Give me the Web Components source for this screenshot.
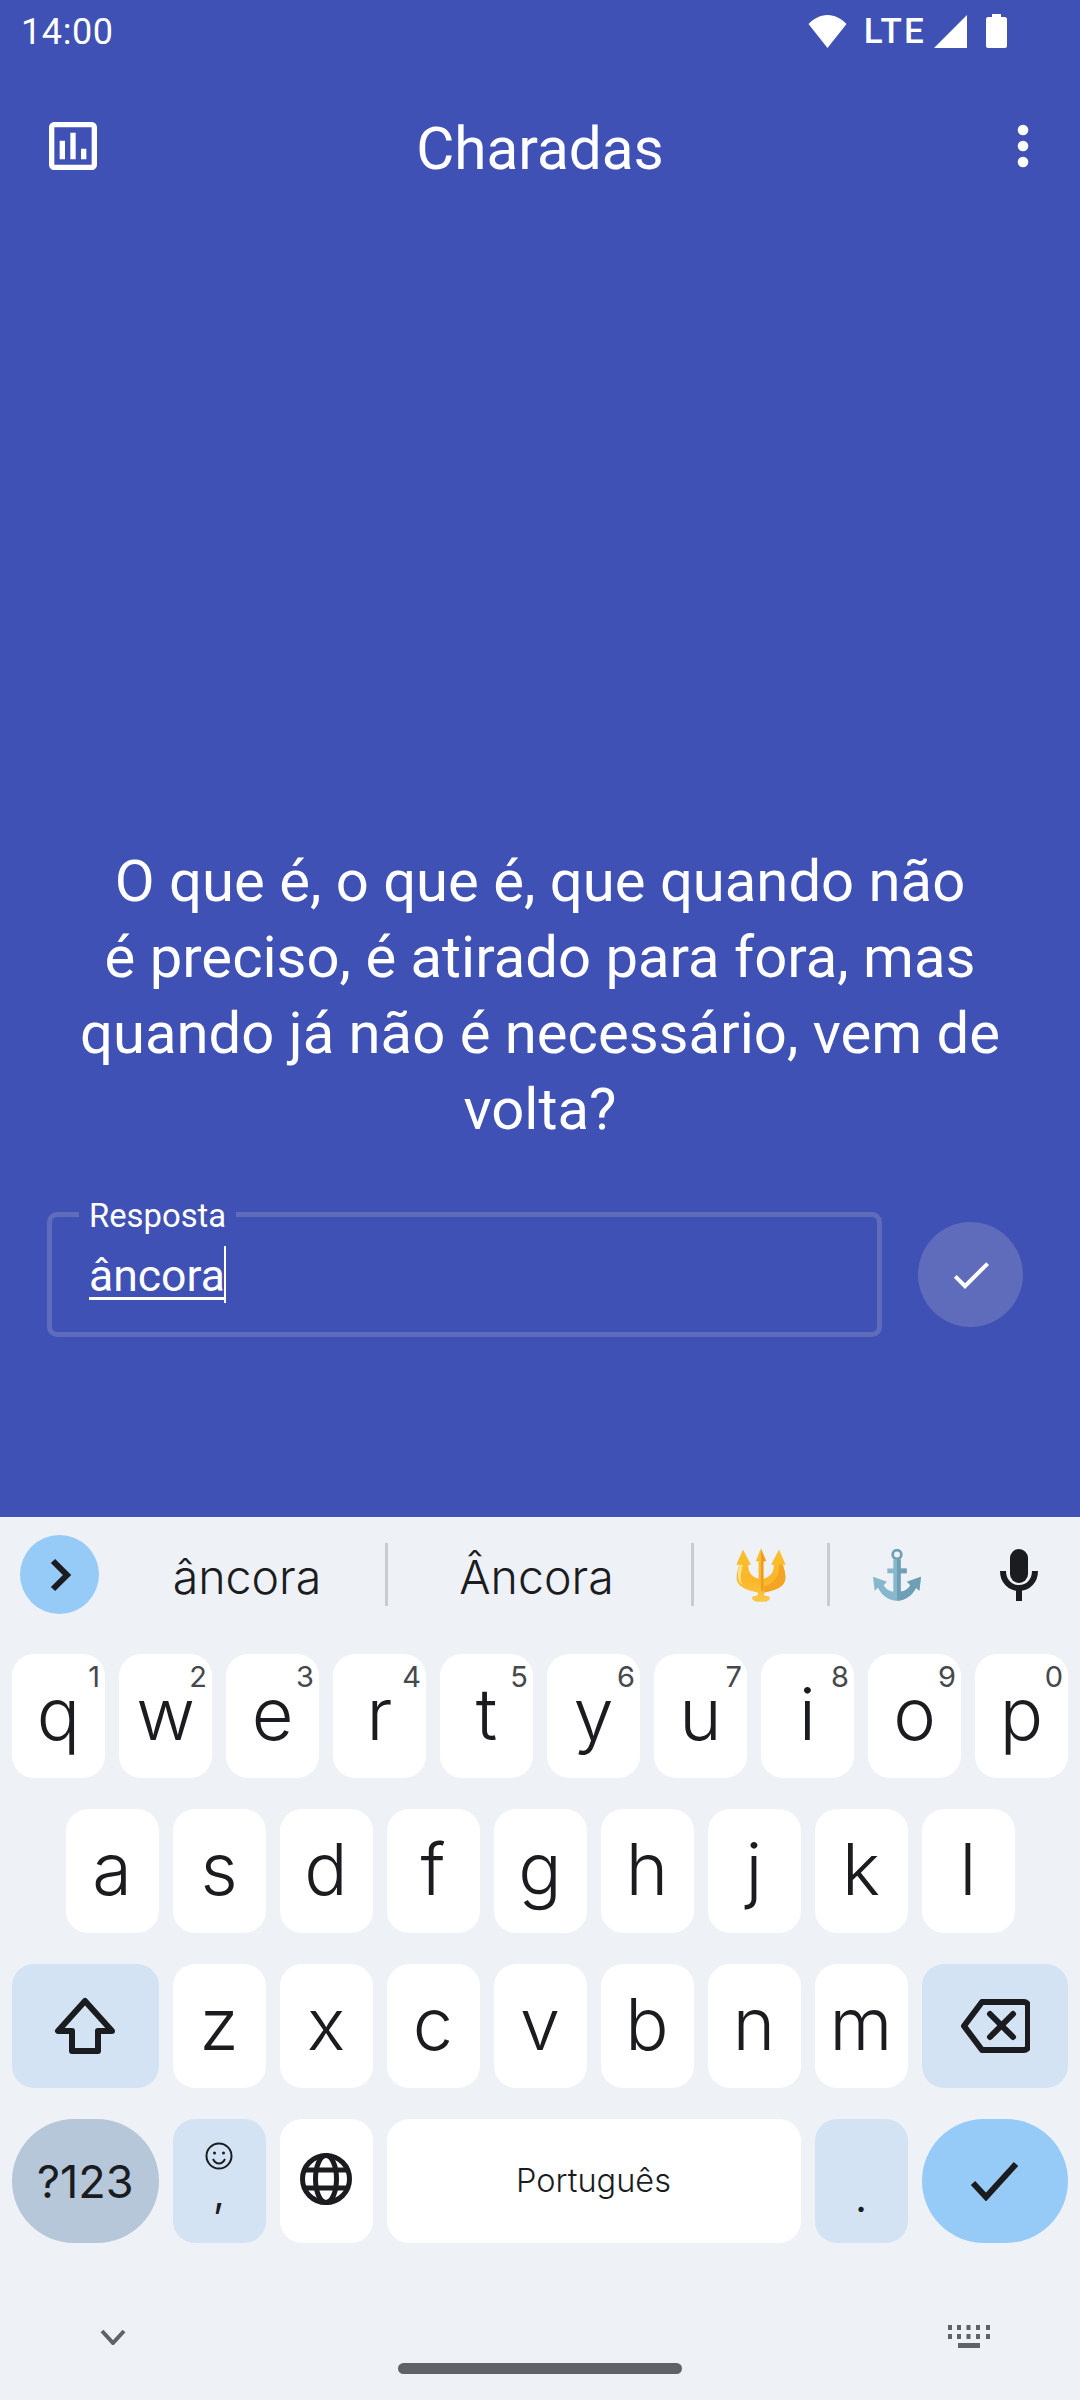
<!DOCTYPE html>
<html lang="pt">
<head>
<meta charset="utf-8">
<title>Charadas</title>
<style>
  html, body { margin: 0; padding: 0; }
  body { width: 1080px; height: 2400px; font-family: Roboto, sans-serif; background: #3f51b5; }
</style>
</head>
<body>
<charadas-app></charadas-app>

<script>
class StatusBar extends HTMLElement {
  connectedCallback() {
    this.attachShadow({ mode: 'open' }).innerHTML = `
      <style>
        :host { display: flex; align-items: center; justify-content: space-between; height: 62px; padding: 0 73px 0 21px; color: #fff; font-family: Roboto, sans-serif; }
        .time { font-size: 36px; letter-spacing: .6px; margin-top: 2px; }
        .right { display: flex; align-items: center; }
        .lte { font-size: 35px; font-weight: 500; margin: 0 8px 0 17px; letter-spacing: 2.200px; }
        svg { display: block; fill: #fff; }
      </style>
      <span class="time">14:00</span>
      <div class="right">
        <svg width="39" height="33" viewBox="0 0 39 33"><path d="M19.500 33 .5 9C5 4 12 0 19.500 0S34 4 38.500 9z"/></svg>
        <span class="lte">LTE</span>
        <svg width="33" height="33" viewBox="0 0 33 33"><path d="M33 0v33H0z"/></svg>
        <svg style="margin-left:19px" width="21" height="34" viewBox="0 0 21 34"><path d="M6 0h9v3h4c1 0 2 1 2 2v27c0 1-1 2-2 2H2c-1 0-2-1-2-2V5c0-1 1-2 2-2h4z"/></svg>
      </div>`;
  }
}

class AppToolbar extends HTMLElement {
  connectedCallback() {
    this.attachShadow({ mode: 'open' }).innerHTML = `
      <style>
        :host { display: grid; grid-template-columns: 1fr auto 1fr; align-items: center; height: 168px; padding: 0 25px 0 41px; color: #fff; font-family: Roboto, sans-serif; }
        h1 { margin: 6px 0 0 -16px; font-size: 58.500px; font-weight: 400; }
        svg { display: block; fill: #fff; width: 64px; height: 64px; }
        .end { justify-self: end; }
      </style>
      <svg viewBox="0 0 24 24"><path d="M19 3H5c-1.100 0-2 .9-2 2v14c0 1.100.9 2 2 2h14c1.100 0 2-.9 2-2V5c0-1.100-.9-2-2-2zm0 16H5V5h14v14z"/><path d="M7 10h2v7H7zm4-3h2v10h-2zm4 6h2v4h-2z"/></svg>
      <h1><slot></slot></h1>
      <svg class="end" viewBox="0 0 24 24"><circle cx="12" cy="6" r="2"/><circle cx="12" cy="12" r="2"/><circle cx="12" cy="18" r="2"/></svg>`;
  }
}

class RiddleText extends HTMLElement {
  connectedCallback() {
    this.attachShadow({ mode: 'open' }).innerHTML = `
      <style>
        :host { display: block; text-align: center; color: #fff; font-size: 58px; line-height: 76px; font-family: Roboto, sans-serif; }
      </style>
      <slot></slot>`;
  }
}

class AnswerField extends HTMLElement {
  connectedCallback() {
    this.attachShadow({ mode: 'open' }).innerHTML = `
      <style>
        :host { display: flex; align-items: center; padding: 0 57px 0 47px; color: #fff; font-family: Roboto, sans-serif; }
        .box { position: relative; box-sizing: border-box; width: 835px; height: 125px; border: 5px solid #5f6cbc; border-radius: 10px; padding: 32px 0 0 37px; }
        .label { position: absolute; left: 27px; top: -19px; padding: 0 10px; font-size: 32.800px; line-height: 36px; background: #3f51b5; }
        .value { display: inline-block; position: relative; font-size: 44.500px; line-height: 54px; text-decoration: underline; text-decoration-thickness: 3px; text-underline-offset: 6px; }
        .caret { position: absolute; right: -1px; top: -3px; width: 2px; height: 57px; background: #fff; }
        .send { margin-left: 36px; width: 105px; height: 105px; border-radius: 50%; background: #5f6cbc; display: flex; align-items: center; justify-content: center; }
        .send svg { width: 48px; height: 48px; fill: #fff; }
      </style>
      <div class="box">
        <span class="label">Resposta</span>
        <span class="value"><slot></slot><i class="caret"></i></span>
      </div>
      <div class="send">
        <svg viewBox="0 0 24 24"><path d="M9 16.170 4.830 12l-1.420 1.410L9 19 21 7l-1.410-1.410z"/></svg>
      </div>`;
  }
}

class KbKey extends HTMLElement {
  connectedCallback() {
    const span = this.getAttribute('span') || 2;
    const hint = this.getAttribute('hint');
    this.attachShadow({ mode: 'open' }).innerHTML = `
      <style>
        :host { display: flex; align-items: center; justify-content: center; position: relative; box-sizing: border-box; grid-column: span ${span}; margin: 0 7px; height: 124px; padding-bottom: 4px; border-radius: 22px; background: #fff; color: #1b1c1f; font-family: Inter, sans-serif; font-size: 72px; font-weight: 350; line-height: 1; }
        :host([kind="mod"]) { background: #d3e3f3; padding-bottom: 0; }
        :host([kind="sym"]) { background: #b5c7d9; border-radius: 62px; font-size: 45px; font-weight: 400; padding-bottom: 0; }
        :host([kind="go"]) { background: #96cbf7; border-radius: 62px; padding-bottom: 0; }
        :host([kind="space"]) { font-size: 32.500px; font-weight: 300; padding-bottom: 0; }
        .hint { position: absolute; top: 7px; right: 5px; font-size: 29px; font-weight: 400; letter-spacing: 0; line-height: 32px; color: #46484c; }
      </style>
      <slot></slot>
      ${hint ? `<span class="hint">${hint}</span>` : ''}`;
  }
}

class SuggestionStrip extends HTMLElement {
  connectedCallback() {
    this.attachShadow({ mode: 'open' }).innerHTML = `
      <style>
        :host { display: flex; align-items: center; box-sizing: border-box; height: 137px; padding-bottom: 22px; color: #1b1c1f; font-family: Inter, sans-serif; font-size: 46.500px; font-weight: 300; }
        .more { width: 79px; height: 79px; margin-left: 20px; border-radius: 50%; background: #96cbf7; display: flex; align-items: center; justify-content: center; flex: none; }
        .cell { display: flex; align-items: center; justify-content: center; height: 63px; flex: none; box-sizing: border-box; }
        .cell + .cell { border-left: 3px solid #c9cdd2; }
        .word { padding-top: 5px; }
        .w1 { width: 286px; padding-left: 10px; }
        .w2 { width: 306px; padding-right: 6px; }
        .w3 { width: 136px; }
        .w4 { width: 125px; padding-left: 11px; }
        .mic { flex: 1; padding-left: 48px; }
        svg { display: block; }
      </style>
      <div class="more"><svg width="24" height="36" viewBox="0 0 24 36"><path d="M5 4l14 14L5 32" fill="none" stroke="#1b1c1f" stroke-width="6"/></svg></div>
      <div class="cell w1"><span class="word">âncora</span></div>
      <div class="cell w2"><span class="word">Âncora</span></div>
      <div class="cell w3">
        <svg width="52" height="54" viewBox="0 0 150 155">
          <defs>
            <linearGradient id="gold" x1="0" y1="0" x2="0" y2="1"><stop offset="0" stop-color="#fbc02d"/><stop offset=".6" stop-color="#fbb62a"/><stop offset="1" stop-color="#f8c948"/></linearGradient>
          </defs>
          <path d="M75 0 90 38H82V88C100 84 112 72 112 48H104L127 4 146 48H138C148 80 150 100 130 112 115 122 95 125 84 128V136L100 140V148L90 155H60L50 148V140L66 136V128C55 125 35 122 20 112 0 100 2 80 12 48H4L23 4 46 48H38C38 72 50 84 68 88V38H60Z" fill="url(#gold)"/>
          <path d="M75 4V125L82 122V38H90Z" fill="#f09a1f"/>
          <path d="M127 8V48H138C148 80 150 100 130 112 115 122 95 125 84 128V110C110 104 128 85 127 48Z" fill="#f3a423"/>
          <path d="M23 48H12C6 76 6 96 22 106 12 90 18 66 23 48Z" fill="#fde08a"/>
        </svg>
      </div>
      <div class="cell w4">
        <svg width="50" height="52" viewBox="0 0 150 155">
          <circle cx="75" cy="16" r="13" fill="none" stroke="#6f9fb5" stroke-width="8"/>
          <path d="M64 30H86V58H104V72H86V128C100 125 110 118 115 108L105 98 147 83 142 125 132 116C120 142 95 155 75 155 55 155 30 142 18 116L8 125 3 83 45 98 35 108C40 118 50 125 64 128V72H46V58H64Z" fill="#87b7ca"/>
          <path d="M75 30H86V58H104V72H86V128C100 125 110 118 115 108L105 98 147 83 142 125 132 116C120 142 95 155 75 155Z" fill="#6f9fb5"/>
        </svg>
      </div>
      <div class="mic">
        <svg width="38" height="52" viewBox="0 0 38 52" fill="#1b1c1f"><rect x="10" y="0" width="18" height="34" rx="9"/><path d="M3 22c0 10 7 17 16 17s16-7 16-17" fill="none" stroke="#1b1c1f" stroke-width="6"/><rect x="16" y="37" width="6" height="15"/></svg>
      </div>`;
  }
}

class GboardPanel extends HTMLElement {
  connectedCallback() {
    const row1 = [...'qwertyuiop'].map((c, i) => `<kb-key hint="${(i + 1) % 10}"${c === 'w' ? ' style="letter-spacing:-6px;padding-right:6px"' : ''}>${c}</kb-key>`).join('');
    const row2 = [...'sdfghjkl'].map(c => `<kb-key>${c}</kb-key>`).join('');
    const row3 = [...'zxcvbnm'].map(c => `<kb-key>${c}</kb-key>`).join('');
    this.attachShadow({ mode: 'open' }).innerHTML = `
      <style>
        :host { display: block; height: 883px; background: #eef1f6; font-family: Roboto, sans-serif; }
        .keys { display: grid; grid-template-columns: repeat(20, 53.500px); padding: 0 5px; row-gap: 31px; }
        .emoji { display: flex; flex-direction: column; align-items: center; gap: 8px; padding-bottom: 12px; font-size: 40px; font-weight: 400; line-height: 30px; }
        .bottom { display: flex; justify-content: space-between; align-items: center; padding: 0 90px 0 100px; margin-top: 82px; }
        .pill { width: 284px; height: 11px; border-radius: 6px; background: #5f6368; margin: 15px auto 0; }
        svg { display: block; }
      </style>
      <suggestion-strip></suggestion-strip>
      <div class="keys">
        ${row1}
        <kb-key style="grid-column: 2 / span 2">a</kb-key>${row2}
        <kb-key span="3" kind="mod">
          <svg width="62" height="58" viewBox="0 0 62 58"><path d="M31 4 4 34h14v20h26V34h14z" fill="none" stroke="#1b1c1f" stroke-width="6" stroke-linejoin="round"/></svg>
        </kb-key>
        ${row3}
        <kb-key span="3" kind="mod">
          <svg width="70" height="54" viewBox="0 0 70 54"><path d="M22 3h42a4 4 0 0 1 4 4v40a4 4 0 0 1-4 4H22L4 27z" fill="none" stroke="#1b1c1f" stroke-width="6" stroke-linejoin="round"/><path d="M30 15l23 23M53 15 30 38" fill="none" stroke="#1b1c1f" stroke-width="6" stroke-linecap="round"/></svg>
        </kb-key>
        <kb-key span="3" kind="sym">?123</kb-key>
        <kb-key kind="mod">
          <div class="emoji">
            <svg width="28" height="28" viewBox="0 0 28 28" fill="none" stroke="#1b1c1f" stroke-width="2"><circle cx="14" cy="14" r="12.500"/><circle cx="9.500" cy="11" r="1.500" fill="#1b1c1f" stroke="none"/><circle cx="18.500" cy="11" r="1.500" fill="#1b1c1f" stroke="none"/><path d="M8 17c1.500 3 3.500 4.500 6 4.500s4.500-1.500 6-4.500"/></svg>
            <span>,</span>
          </div>
        </kb-key>
        <kb-key>
          <svg width="52" height="52" viewBox="0 0 52 52" fill="none" stroke="#1b1c1f" stroke-width="5"><circle cx="26" cy="26" r="23.500"/><ellipse cx="26" cy="26" rx="10.500" ry="23.500"/><path d="M4 17h44M4 35h44"/></svg>
        </kb-key>
        <kb-key span="8" kind="space">Português</kb-key>
        <kb-key kind="mod" style="font-size:40px;font-weight:400"><span style="padding-top:34px">.</span></kb-key>
        <kb-key span="3" kind="go">
          <svg width="50" height="40" viewBox="0 0 50 40"><path d="M3 22l13 14L46 3" fill="none" stroke="#1b1c1f" stroke-width="6"/></svg>
        </kb-key>
      </div>
      <div class="bottom">
        <svg width="26" height="16" viewBox="0 0 26 16"><path d="M2 2l11 12L24 2" fill="none" stroke="#5f6368" stroke-width="4"/></svg>
        <svg width="42" height="23" viewBox="0 0 42 23" fill="#5f6368"><path d="M0 0h4v5H0zm9 0h4v5H9zm9.500 0h4v5h-4zm9.500 0h4v5h-4zm10 0h4v5h-4zM0 9h4v5H0zm9 0h4v5H9zm9.500 0h4v5h-4zm9.500 0h4v5h-4zm10 0h4v5h-4zM10 18h22v5H10z"/></svg>
      </div>
      <div class="pill"></div>`;
  }
}

class CharadasApp extends HTMLElement {
  connectedCallback() {
    this.attachShadow({ mode: 'open' }).innerHTML = `
      <style>
        :host { display: flex; flex-direction: column; height: 2400px; background: #3f51b5; }
        main { flex: 1; display: flex; flex-direction: column; justify-content: flex-end; padding-bottom: 180px; }
        riddle-text { margin-bottom: 65px; }
      </style>
      <status-bar></status-bar>
      <app-toolbar>Charadas</app-toolbar>
      <main>
        <riddle-text>O que é, o que é, que quando não<br>é preciso, é atirado para fora, mas<br>quando já não é necessário, vem de<br>volta?</riddle-text>
        <answer-field>âncora</answer-field>
      </main>
      <gboard-panel></gboard-panel>`;
  }
}

customElements.define('status-bar', StatusBar);
customElements.define('app-toolbar', AppToolbar);
customElements.define('riddle-text', RiddleText);
customElements.define('answer-field', AnswerField);
customElements.define('kb-key', KbKey);
customElements.define('suggestion-strip', SuggestionStrip);
customElements.define('gboard-panel', GboardPanel);
customElements.define('charadas-app', CharadasApp);
</script>
</body>
</html>
